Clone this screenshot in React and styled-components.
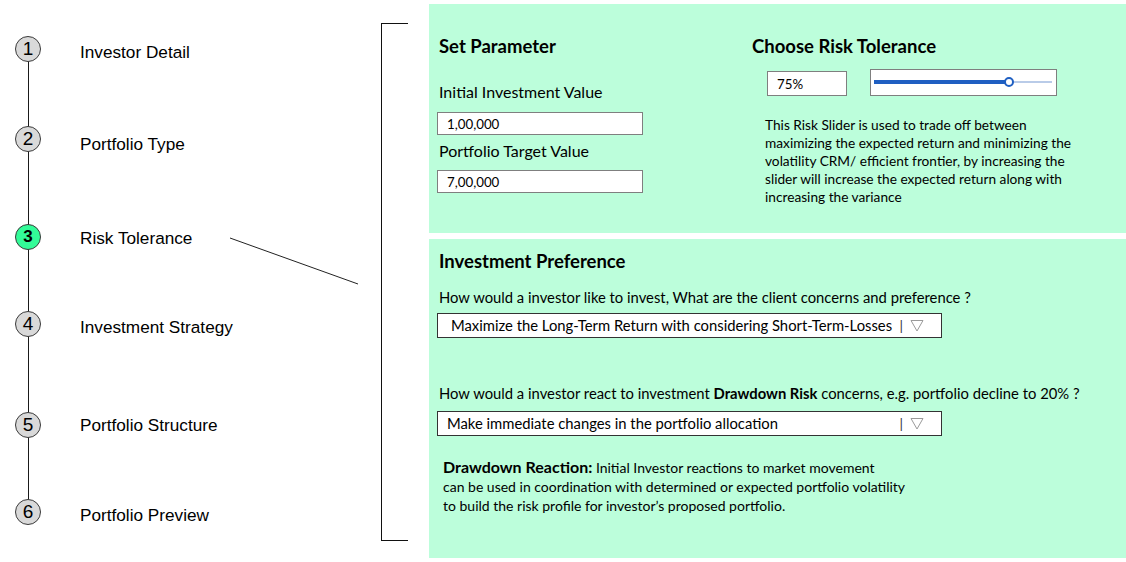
import React from 'react'
import styled, { createGlobalStyle } from 'styled-components'

const GlobalStyle = createGlobalStyle`
  html, body {
    margin: 0;
    padding: 0;
    background: #ffffff;
  }
  body {
    font-family: "Liberation Sans", Arial, sans-serif;
    color: #000;
  }
`

const Page = styled.div`
  display: flex;
  width: 1126px;
  height: 562px;
  overflow: hidden;
`

const Stepper = styled.ul`
  position: relative;
  list-style: none;
  margin: 0;
  padding: 36px 0 0 15px;
  width: 215px;
  flex: none;

  &::before {
    content: '';
    position: absolute;
    left: 28px;
    top: 49px;
    height: 463px;
    width: 1px;
    background: #1a1a1a;
  }
`

const Step = styled.li`
  position: relative;
  display: flex;
  align-items: center;
  height: 26px;
  margin-top: ${p => p.gap || 0}px;
`

const Circle = styled.span`
  position: relative;
  z-index: 1;
  box-sizing: border-box;
  width: 26px;
  height: 26px;
  border-radius: 50%;
  border: 1px solid #3a3a3a;
  background: ${p => (p.active ? '#33fb98' : '#d9d9d9')};
  display: flex;
  align-items: center;
  justify-content: center;
  font-size: ${p => (p.active ? '17px' : '19px')};
  font-weight: ${p => (p.active ? 'bold' : 'normal')};
  flex: none;
`

const StepLabel = styled.span`
  margin-left: 39px;
  font-size: 17.2px;
  white-space: nowrap;
  margin-top: ${p => p.drop}px;
`

const Connector = styled.svg`
  flex: none;
  display: block;
`

const Bracket = styled.div`
  flex: none;
  box-sizing: border-box;
  width: 27px;
  height: 518px;
  margin: 23px 21px 0 11px;
  border-left: 1.5px solid #111;
  border-top: 1.5px solid #111;
  border-bottom: 1.5px solid #111;
`

const Panels = styled.div`
  flex: 1;
  display: flex;
  flex-direction: column;
  gap: 6px;
  padding-top: 4px;
  font-family: Lato, "Open Sans", sans-serif;
`

const Panel = styled.section`
  background: #bcfedb;
  height: ${p => p.h}px;
  box-sizing: border-box;
  padding: ${p => p.pad};
`

const TopPanel = styled(Panel)`
  display: grid;
  grid-template-columns: 313px 1fr;
`

const Column = styled.div`
  display: flex;
  flex-direction: column;
  align-items: flex-start;
`

const Title = styled.h2`
  margin: 0;
  font-size: 18.5px;
  line-height: 20px;
  font-weight: 700;
`

const FieldLabel = styled.div`
  font-size: 16px;
  line-height: 20px;
  margin-top: ${p => p.mt}px;
`

const TextInput = styled.div`
  box-sizing: border-box;
  width: ${p => p.w}px;
  height: ${p => p.h || 23}px;
  margin-top: ${p => p.mt || 0}px;
  margin-left: ${p => p.ml || 0}px;
  background: #fff;
  border: 1px solid #7f7f7f;
  display: flex;
  align-items: center;
  padding-left: ${p => p.pl || 9}px;
  font-size: 13.3px;
`

const ControlRow = styled.div`
  display: flex;
  align-items: flex-start;
  margin-top: 13px;
`

const SliderBox = styled.div`
  box-sizing: border-box;
  width: 187px;
  height: 27px;
  margin-left: 23px;
  background: #fff;
  border: 1px solid #7f7f7f;
  display: flex;
  align-items: center;
  padding: 0 4px 1px 3px;
`

const Track = styled.div`
  position: relative;
  flex: 1;
  height: 2px;
  background: #b9cbe8;
`

const Fill = styled.div`
  height: 3.5px;
  margin-top: -0.75px;
  background: #1f5fc2;
`

const Thumb = styled.span`
  position: absolute;
  top: 50%;
  box-sizing: border-box;
  width: 10px;
  height: 10px;
  border-radius: 50%;
  background: #fff;
  border: 2px solid #1f5fc2;
  transform: translate(-50%, -50%);
`

const Description = styled.p`
  margin: 20px 0 0 13px;
  font-size: 13.7px;
  line-height: 18px;
  white-space: nowrap;
`

const Question = styled.div`
  font-size: 14.8px;
  line-height: 20px;
  margin-top: ${p => p.mt}px;

  b {
    font-weight: 700;
  }
`

const Select = styled.div`
  box-sizing: border-box;
  width: 505px;
  height: 25px;
  margin-left: -2px;
  margin-top: ${p => p.mt}px;
  background: #fff;
  border: 1px solid #333;
  display: flex;
  align-items: center;
  padding: 0 17px 1px ${p => p.pl}px;
  font-size: 14.8px;
`

const SelectText = styled.span`
  flex: 1;
  white-space: nowrap;
`

const Caret = styled.span`
  display: flex;
  align-items: center;
  gap: 7px;
  color: #333;
  font-size: 14px;

  svg {
    display: block;
  }
`

const Note = styled.p`
  margin: 21px 0 0 4px;
  font-size: 14px;
  line-height: 19px;

  b {
    font-size: 16px;
    font-weight: 700;
  }
`

const steps = [
  { n: 1, label: 'Investor Detail', gap: 0, drop: 6 },
  { n: 2, label: 'Portfolio Type', gap: 64, drop: 10 },
  { n: 3, label: 'Risk Tolerance', gap: 72, drop: 2, active: true },
  { n: 4, label: 'Investment Strategy', gap: 61, drop: 6 },
  { n: 5, label: 'Portfolio Structure', gap: 75, drop: 1 },
  { n: 6, label: 'Portfolio Preview', gap: 61, drop: 6 },
]

function DropCaret() {
  return (
    <Caret>
      <span>|</span>
      <svg width="14" height="13" viewBox="0 0 14 13">
        <path d="M1 1.5 L13 1.5 L7 12 Z" fill="none" stroke="#9a9a9a" strokeWidth="1" />
      </svg>
    </Caret>
  )
}

export default function App() {
  const risk = 76

  return (
    <>
      <GlobalStyle />
      <Page>
        <Stepper>
          {steps.map(s => (
            <Step key={s.n} gap={s.gap}>
              <Circle active={s.active}>{s.n}</Circle>
              <StepLabel drop={s.drop}>{s.label}</StepLabel>
            </Step>
          ))}
        </Stepper>

        <Connector width="140" height="562">
          <line x1="0" y1="238" x2="128" y2="284" stroke="#222" strokeWidth="1" />
        </Connector>

        <Bracket />

        <Panels>
          <TopPanel h={229} pad="32px 0 0 10px">
            <Column>
              <Title>Set Parameter</Title>
              <FieldLabel mt={26}>Initial Investment Value</FieldLabel>
              <TextInput w={206} mt={10} ml={-2}>1,00,000</TextInput>
              <FieldLabel mt={6}>Portfolio Target Value</FieldLabel>
              <TextInput w={206} mt={9} ml={-2}>7,00,000</TextInput>
            </Column>

            <Column>
              <Title>Choose Risk Tolerance</Title>
              <ControlRow>
                <TextInput w={80} h={25} mt={2} ml={15} pl={9}>75%</TextInput>
                <SliderBox>
                  <Track>
                    <Fill style={{ width: `${risk}%` }} />
                    <Thumb style={{ left: `${risk}%` }} />
                  </Track>
                </SliderBox>
              </ControlRow>
              <Description>
                This Risk Slider is used to trade off between
                <br />
                maximizing the expected return and minimizing the
                <br />
                volatility CRM/ efficient frontier, by increasing the
                <br />
                slider will increase the expected return along with
                <br />
                increasing the variance
              </Description>
            </Column>
          </TopPanel>

          <Panel h={319} pad="12px 0 0 10px">
            <Title>Investment Preference</Title>
            <Question mt={16}>
              How would a investor like to invest, What are the client concerns and preference ?
            </Question>
            <Select mt={6} pl={13}>
              <SelectText>Maximize the Long-Term Return with considering Short-Term-Losses</SelectText>
              <DropCaret />
            </Select>
            <Question mt={45}>
              How would a investor react to investment <b>Drawdown Risk</b> concerns, e.g. portfolio
              decline to 20% ?
            </Question>
            <Select mt={8} pl={9}>
              <SelectText>Make immediate changes in the portfolio allocation</SelectText>
              <DropCaret />
            </Select>
            <Note>
              <b>Drawdown Reaction:</b> Initial Investor reactions to market movement
              <br />
              can be used in coordination with determined or expected portfolio volatility
              <br />
              to build the risk profile for investor’s proposed portfolio.
            </Note>
          </Panel>
        </Panels>
      </Page>
    </>
  )
}
